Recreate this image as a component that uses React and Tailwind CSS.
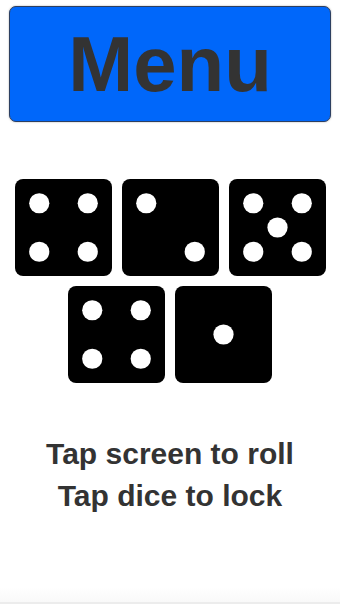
import React from "react";

const PIPS = {
  1: [[48, 48]],
  2: [[24, 24], [72, 72]],
  4: [[24, 24], [72, 24], [24, 72], [72, 72]],
  5: [[24, 24], [72, 24], [48, 48], [24, 72], [72, 72]],
};

function Die({ value }) {
  return (
    <svg viewBox="0 0 96 96" className="w-[97px] h-[97px] block">
      <rect x="0" y="0" width="96" height="96" rx="8" ry="8" fill="#000" />
      {PIPS[value].map(([cx, cy], i) => (
        <circle key={i} cx={cx} cy={cy} r="10" fill="#fff" />
      ))}
    </svg>
  );
}

export default function App() {
  return (
    <div
      className="w-[340px] h-[604px] bg-white flex flex-col items-center overflow-hidden"
      style={{ fontFamily: '"Liberation Sans", Arial, sans-serif' }}
    >
      <div className="mt-[6px] w-[322px] h-[116px] shrink-0 rounded-[7px] border border-[#2d3f60] bg-[#0067fa] shadow-[0_0_2px_rgba(0,0,0,0.35)] flex items-center justify-center">
        <span className="text-[78px] font-bold text-[#333333] leading-normal">Menu</span>
      </div>

      <div className="mt-[57px] flex flex-col items-center gap-[10px]">
        <div className="flex gap-[10px]">
          <Die value={4} />
          <Die value={2} />
          <Die value={5} />
        </div>
        <div className="flex gap-[10px]">
          <Die value={4} />
          <Die value={1} />
        </div>
      </div>

      <div className="mt-[50px] flex flex-col items-center text-[30px] leading-[42px] font-bold text-[#333333]">
        <div>Tap screen to roll</div>
        <div>Tap dice to lock</div>
      </div>

      <div className="flex-1" />
      <div className="w-full h-[15px] shrink-0 bg-gradient-to-b from-white to-[#f9f9f9]" />
      <div className="w-full h-[2px] shrink-0 bg-[#ececec]" />
    </div>
  );
}
